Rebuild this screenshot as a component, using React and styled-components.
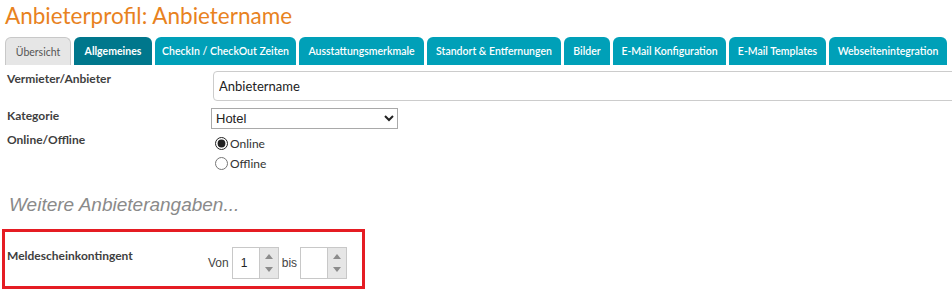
import { useState } from 'react';
import styled, { createGlobalStyle } from 'styled-components';

const GlobalStyle = createGlobalStyle`
  body {
    margin: 0;
    background: #fff;
    font-family: Lato, 'Liberation Sans', sans-serif;
    color: #444;
  }
`;

const Page = styled.div`
  padding: 0 0 0 5px;
  overflow: hidden;
  width: 947px;
`;

const Title = styled.h1`
  margin: 0;
  padding-top: 3px;
  height: 34px;
  font-size: 22.5px;
  font-weight: 400;
  color: #e8821e;
  line-height: 26px;
`;

const TabBar = styled.div`
  display: flex;
  gap: 3px;
  height: 28px;
`;

const Tab = styled.div`
  display: flex;
  align-items: center;
  justify-content: center;
  width: ${(p) => p.$w}px;
  box-sizing: border-box;
  border-radius: 6px 6px 0 0;
  font-size: 10.5px;
  white-space: nowrap;
  background: ${(p) => (p.$kind === 'plain' ? '#e6e6e6' : p.$kind === 'active' ? '#00778c' : '#00a0b8')};
  color: ${(p) => (p.$kind === 'plain' ? '#555' : '#fff')};
  font-weight: ${(p) => (p.$kind === 'active' ? 700 : p.$kind === 'plain' ? 400 : 600)};
  border: ${(p) => (p.$kind === 'plain' ? '1px solid #c8c8c8' : 'none')};
  border-bottom: none;
`;

const Form = styled.div`
  padding-top: 6px;
`;

const Row = styled.div`
  display: grid;
  grid-template-columns: 206px 1fr;
  min-height: ${(p) => p.$h}px;
`;

const Label = styled.div`
  font-size: 12px;
  font-weight: 700;
  color: #3f3f3f;
  padding-top: ${(p) => p.$top || 0}px;
  padding-left: 2px;
`;

const TextInput = styled.input`
  width: 760px;
  height: 30px;
  box-sizing: border-box;
  border: 1px solid #ccc;
  border-radius: 4px;
  padding: 0 5px;
  font-family: Lato, 'Liberation Sans', sans-serif;
  font-size: 13px;
  color: #222;
  margin-left: 2px;
  outline: none;
`;

const Select = styled.select`
  width: 187px;
  height: 21px;
  border: 1px solid #a9a9a9;
  border-radius: 0;
  font-family: 'Liberation Sans', Arial, sans-serif;
  font-size: 13px;
  color: #222;
  background: #fff;
  margin-top: 1px;
`;

const RadioList = styled.div`
  display: flex;
  flex-direction: column;
  gap: 5px;
  padding-top: 5px;
  padding-left: 4px;
`;

const RadioLine = styled.label`
  display: flex;
  align-items: center;
  font-size: 12px;
  color: #333;
  gap: 2px;
`;

const Radio = styled.input`
  margin: 0;
  width: 13px;
  height: 13px;
  accent-color: #222;
`;

const Subheading = styled.div`
  font-family: 'Liberation Sans', Arial, sans-serif;
  font-style: italic;
  font-size: 19px;
  color: #8a8a8a;
  margin: 23px 0 0 4px;
  height: 24px;
`;

const Highlight = styled.div`
  margin: 11px 0 0 -3px;
  width: 363px;
  height: 60px;
  box-sizing: border-box;
  border: 3px solid #e51c23;
  display: grid;
  grid-template-columns: 203px 1fr;
`;

const RangeGroup = styled.div`
  display: flex;
  align-items: center;
  gap: 3px;
  padding-top: 15px;
  align-self: start;
  font-family: 'Liberation Sans', Arial, sans-serif;
  font-size: 12px;
  color: #444;
`;

const NumberBox = styled.div`
  display: flex;
  width: 47px;
  height: 32px;
  box-sizing: border-box;
  border: 1px solid #c8c8c8;
`;

const NumberValue = styled.div`
  flex: 1;
  display: flex;
  align-items: center;
  padding-left: 8px;
  font-size: 12px;
  color: #222;
`;

const Spinner = styled.div`
  width: 19px;
  background: #e6e6e6;
  border-left: 1px solid #c8c8c8;
  display: flex;
  flex-direction: column;
  align-items: center;
  justify-content: space-between;
  padding: 6px 0;
  box-sizing: border-box;
`;

const Arrow = styled.div`
  width: 0;
  height: 0;
  border-left: 4px solid transparent;
  border-right: 4px solid transparent;
  ${(p) => (p.$up ? 'border-bottom: 5px solid #8c8c8c;' : 'border-top: 5px solid #8c8c8c;')}
`;

const tabs = [
  { t: 'Übersicht', w: 66, kind: 'plain' },
  { t: 'Allgemeines', w: 78, kind: 'active' },
  { t: 'CheckIn / CheckOut Zeiten', w: 141 },
  { t: 'Ausstattungsmerkmale', w: 125 },
  { t: 'Standort & Entfernungen', w: 134 },
  { t: 'Bilder', w: 46 },
  { t: 'E-Mail Konfiguration', w: 113 },
  { t: 'E-Mail Templates', w: 97 },
  { t: 'Webseitenintegration', w: 118 },
];

function NumberField({ value }) {
  return (
    <NumberBox>
      <NumberValue>{value}</NumberValue>
      <Spinner>
        <Arrow $up />
        <Arrow />
      </Spinner>
    </NumberBox>
  );
}

export default function App() {
  const [online, setOnline] = useState(true);
  return (
    <>
      <GlobalStyle />
      <Page>
        <Title>Anbieterprofil: Anbietername</Title>
        <TabBar>
          {tabs.map((tab) => (
            <Tab key={tab.t} $w={tab.w} $kind={tab.kind}>
              {tab.t}
            </Tab>
          ))}
        </TabBar>
        <Form>
          <Row $h={36}>
            <Label $top={0}>Vermieter/Anbieter</Label>
            <TextInput defaultValue="Anbietername" />
          </Row>
          <Row $h={24}>
            <Label $top={1}>Kategorie</Label>
            <Select defaultValue="Hotel">
              <option>Hotel</option>
            </Select>
          </Row>
          <Row $h={40}>
            <Label $top={1}>Online/Offline</Label>
            <RadioList>
              <RadioLine>
                <Radio type="radio" checked={online} onChange={() => setOnline(true)} />
                Online
              </RadioLine>
              <RadioLine>
                <Radio type="radio" checked={!online} onChange={() => setOnline(false)} />
                Offline
              </RadioLine>
            </RadioList>
          </Row>
        </Form>
        <Subheading>Weitere Anbieterangaben...</Subheading>
        <Highlight>
          <Label $top={16}>Meldescheinkontingent</Label>
          <RangeGroup>
            Von
            <NumberField value="1" />
            bis
            <NumberField value="" />
          </RangeGroup>
        </Highlight>
      </Page>
    </>
  );
}
